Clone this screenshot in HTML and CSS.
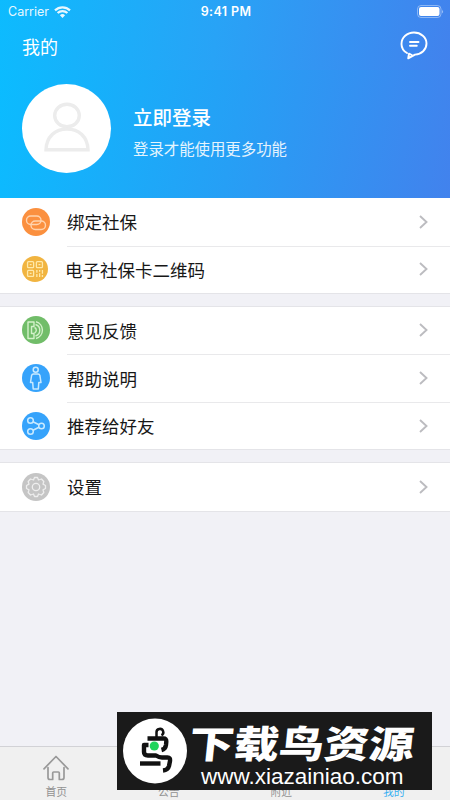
FILE: index.html
```html
<!DOCTYPE html>
<html lang="zh-CN">
<head>
	<meta charset="UTF-8">
	<meta name="viewport" content="width=device-width, initial-scale=1.0">
	<title>我的</title>
	<link rel="stylesheet" href="styles.css">
</head>

<body>
<div class="app">
	<header class="top">
		<div class="status-bar">
			<div class="carrier">
				<span>Carrier</span>
				<svg class="wifi" width="17" height="12" viewBox="0 0 17 12" fill="none" stroke="#fff" stroke-width="2.2">
					<path d="M1 4.4a10.6 10.6 0 0 1 15 0M3.6 7.1a6.9 6.9 0 0 1 9.8 0"/>
					<path d="M8.5 12L5.9 9.3a3.7 3.7 0 0 1 5.2 0z" fill="#fff" stroke="none"/>
				</svg>
			</div>
			<div class="time">9:41 PM</div>
			<svg class="battery" width="27" height="13" viewBox="0 0 27 13">
				<rect x=".5" y=".5" width="23.5" height="12" rx="3.5" fill="none" stroke="#fff" stroke-opacity=".4"/>
				<rect x="2" y="2" width="20.5" height="9" rx="2" fill="#fff"/>
				<path d="M25.2 4.5q1.6 2 0 4z" fill="#fff" fill-opacity=".6"/>
			</svg>
		</div>
		<div class="nav-bar">
			<h1 class="title">我的</h1>
			<svg class="message" width="28" height="29" viewBox="0 0 28 29" fill="none" stroke="#fff" stroke-width="1.9" stroke-linecap="round" stroke-linejoin="round">
				<path d="M7 22C3.500 19.900 1.500 16.600 1.500 12.900 1.500 6.500 7.100 1.500 14 1.500S26.500 6.300 26.500 12.500 21.500 23.200 15 23.600L8.200 27.300 9 22.700 11.800 24"/>
				<path d="M10 11H18.500M10 14.800H16.800"/>
			</svg>
		</div>
	</header>

	<section class="profile">
		<div class="avatar">
			<svg width="46" height="50" viewBox="0 0 46 50" fill="none" stroke="#ececec" stroke-width="3.400">
				<ellipse cx="23" cy="13.500" rx="12.300" ry="11.300"/>
				<path d="M2 47.700C2.500 35 11 27 23 27S43.500 35 44 47.700Z"/>
			</svg>
		</div>
		<div class="login">
			<div class="login-title">立即登录</div>
			<div class="login-text">登录才能使用更多功能</div>
		</div>
	</section>

	<main class="menu">
		<div class="group">
			<div class="row">
				<svg class="icon" viewBox="0 0 28 28" fill="none" stroke="#ffd3ad" stroke-width="1.400">
					<circle cx="14" cy="14" r="14" fill="#fb903f" stroke="none"/>
					<rect x="4.500" y="8" width="14.500" height="8.500" rx="4.250"/>
					<rect x="9" y="13" width="14.500" height="8.500" rx="4.250"/>
				</svg>
				<div class="label">绑定社保</div>
				<svg class="arrow" viewBox="0 0 9 14"><path d="M1 1l6.500 6L1 13"/></svg>
			</div>
			<div class="row row-code">
				<svg class="icon" viewBox="0 0 28 28" fill="none" stroke="#ffe9a9" stroke-width="1.400">
					<circle cx="14" cy="14" r="14" fill="#f1b440" stroke="none"/>
					<rect x="6" y="6" width="6.500" height="6.500" rx="1"/>
					<rect x="15.500" y="6" width="6.500" height="6.500" rx="1"/>
					<rect x="6" y="15.500" width="6.500" height="6.500" rx="1"/>
					<path d="M8.300 9.300h2M17.800 9.300h2M8.300 18.800h2M16 15v3m0 1.500v3M19 15v2m0 1.500v4M22 15v4m0 1.500v2"/>
				</svg>
				<div class="label">电子社保卡二维码</div>
				<svg class="arrow" viewBox="0 0 9 14"><path d="M1 1l6.500 6L1 13"/></svg>
			</div>
		</div>

		<div class="group">
			<div class="row">
				<svg class="icon" viewBox="0 0 28 28" fill="none" stroke="#d3f1c9" stroke-width="1.400" stroke-linejoin="round">
					<circle cx="14" cy="14" r="14" fill="#71bd69" stroke="none"/>
					<path d="M6 6H12V10.500H9.500V17.500H12V22.500H6Z"/>
					<path d="M12.500 11.500a3 3 0 0 1 0 5.500M13.500 8.500a6 6 0 0 1 0 11.500M14 5.700a8.700 8.700 0 0 1 0 16.800"/>
				</svg>
				<div class="label">意见反馈</div>
				<svg class="arrow" viewBox="0 0 9 14"><path d="M1 1l6.500 6L1 13"/></svg>
			</div>
			<div class="row">
				<svg class="icon" viewBox="0 0 28 28" fill="none" stroke="#c9eaff" stroke-width="1.500" stroke-linejoin="round">
					<circle cx="14" cy="14" r="14" fill="#36a3fb" stroke="none"/>
					<circle cx="13.700" cy="5.700" r="2.500"/>
					<path d="M11.500 10H16Q17.500 10 17.900 11.500L19 18.500H16.800L16.300 25H11.200L10.700 18.500H8.500L9.600 11.500Q10 10 11.500 10Z"/>
				</svg>
				<div class="label">帮助说明</div>
				<svg class="arrow" viewBox="0 0 9 14"><path d="M1 1l6.500 6L1 13"/></svg>
			</div>
			<div class="row">
				<svg class="icon" viewBox="0 0 28 28" fill="none" stroke="#c9eaff" stroke-width="1.500">
					<circle cx="14" cy="14" r="14" fill="#36a3fb" stroke="none"/>
					<circle cx="8.500" cy="8.500" r="2.800"/>
					<circle cx="19.500" cy="14" r="2.800"/>
					<circle cx="8.500" cy="19.500" r="2.800"/>
					<path d="M11 9.800L17 12.700M11 18.200L17 15.300"/>
				</svg>
				<div class="label">推荐给好友</div>
				<svg class="arrow" viewBox="0 0 9 14"><path d="M1 1l6.500 6L1 13"/></svg>
			</div>
		</div>

		<div class="group">
			<div class="row">
				<svg class="icon" viewBox="0 0 28 28" fill="none" stroke="#eee" stroke-width="1.300" stroke-linejoin="round">
					<circle cx="14" cy="14" r="14" fill="#c5c5c5" stroke="none"/>
					<circle cx="14" cy="14" r="3.700"/>
					<path d="M12.500 4.500H15.500L16.500 7 19.500 6 21.800 8.500 21 11.200 23.500 12.500V15.500L21 16.800 21.800 19.500 19.500 22 16.500 21 15.500 23.500H12.500L11.500 21 8.500 22 6.200 19.500 7 16.800 4.500 15.500V12.500L7 11.200 6.200 8.500 8.500 6 11.500 7Z"/>
				</svg>
				<div class="label">设置</div>
				<svg class="arrow" viewBox="0 0 9 14"><path d="M1 1l6.500 6L1 13"/></svg>
			</div>
		</div>
	</main>

	<nav class="tab-bar">
		<div class="tab">
			<svg width="26" height="26" viewBox="0 0 26 26" fill="none" stroke="#999" stroke-width="1.700" stroke-linejoin="round" stroke-linecap="round">
				<path d="M1 13.800L13 1.500 25 13.800"/>
				<path d="M5 12.500V22.500Q5 24.500 7 24.500H9.700V18Q9.700 17 10.700 17H15.300Q16.300 17 16.300 18V24.500H19Q21 24.500 21 22.500V12.500"/>
			</svg>
			<span>首页</span>
		</div>
		<div class="tab"><span>公告</span></div>
		<div class="tab"><span>附近</span></div>
		<div class="tab active"><span>我的</span></div>
	</nav>

	<div class="banner">
		<svg class="bird" width="64" height="66" viewBox="0 0 64 66" fill="none" stroke="#111" stroke-width="4.400" stroke-linejoin="round">
			<ellipse cx="32" cy="33" rx="32" ry="32.500" fill="#fff" stroke="none"/>
			<path d="M33.500 19V14.500a3.400 3.400 0 1 1 5 2.800" stroke-width="2.500"/>
			<path d="M24.500 20.500H40.500Q43.500 20.500 43.300 23.500L43 27Q42.500 31 38.500 32"/>
			<path d="M25.500 27H21V34Q21 37.500 25 37.500H33Q36 39.500 39 39.500H44.500Q47.500 39.500 47 43L46 48Q45 52 40 52.500"/>
			<path d="M17 45.500H37.500"/>
			<circle cx="31.300" cy="28" r="4.600" fill="#20d45b" stroke="none"/>
		</svg>
		<div class="banner-text">
			<div class="banner-name">下载鸟资源</div>
			<div class="banner-url">www.xiazainiao.com</div>
		</div>
	</div>
</div>
</body>
</html>
```
FILE: styles.css
```css
* {
	box-sizing: border-box;
}
body {
	margin: 0;
	font-family: "Liberation Sans", "Noto Sans CJK SC", sans-serif;
	color: #171717;
}
svg {
	display: block;
	flex-shrink: 0;
}
.app {
	position: relative;
	display: flex;
	flex-direction: column;
	width: 450px;
	height: 800px;
	overflow: hidden;
	background: #f1f1f6;
}

/* header */
.top {
	height: 70px;
	color: #fff;
	background: linear-gradient(98deg, #0dbbfe, #28a3f6 48%, #4282ed);
}
.status-bar {
	display: grid;
	grid-template-columns: 1fr auto 1fr;
	align-items: center;
	height: 23px;
	padding: 0 6px 0 8px;
	font-family: Inter, sans-serif;
	font-size: 12.5px;
}
.carrier {
	display: flex;
	gap: 5px;
	align-items: center;
	opacity: .9;
}
.time {
	font-weight: 600;
	letter-spacing: .4px;
}
.battery {
	justify-self: end;
}
.nav-bar {
	display: flex;
	justify-content: space-between;
	align-items: center;
	height: 45px;
	padding: 0 22px;
}
.title {
	margin: 0;
	font-size: 18px;
	font-weight: 400;
}
.profile {
	display: flex;
	align-items: center;
	height: 128px;
	padding: 0 22px 12px;
	color: #fff;
	background: linear-gradient(101deg, #0bbcff, #269ff5 52%, #4282ed);
}
.avatar {
	display: flex;
	justify-content: center;
	align-items: center;
	width: 89px;
	height: 89px;
	padding-bottom: 3px;
	border-radius: 50%;
	background: #fff;
}
.login {
	margin-left: 22px;
	padding-top: 11px;
}
.login-title {
	font-size: 19.5px;
	font-weight: 500;
	line-height: 32px;
}
.login-text {
	font-size: 15.4px;
	line-height: 31px;
	opacity: .88;
}

/* menu */
.menu {
	flex: 1;
}
.group {
	margin-bottom: 13.500px;
	background: #fff;
	box-shadow: 0 1px #e4e4e8;
}
.group + .group {
	box-shadow: 0 1px #e4e4e8, 0 -1px #e4e4e8;
}
.row {
	display: flex;
	align-items: center;
	position: relative;
	height: 47.600px;
	padding: 0 22px;
}
.row + .row::before {
	content: "";
	position: absolute;
	top: 0;
	left: 67px;
	right: 0;
	height: 1px;
	background: #e9e9eb;
}
.icon {
	width: 28px;
	height: 28px;
}
.label {
	flex: 1;
	margin-left: 17px;
	font-size: 17.500px;
}
.row-code .icon {
	width: 26px;
	height: 26px;
}
.arrow {
	width: 9px;
	height: 14px;
	fill: none;
	stroke: #bcbcc0;
	stroke-width: 1.900;
}

/* tabs */
.tab-bar {
	display: flex;
	height: 54px;
	border-top: 1px solid #d2d2d6;
	background: #f0f0f0;
}
.tab {
	display: flex;
	flex: 1;
	flex-direction: column;
	justify-content: flex-end;
	align-items: center;
	gap: 3px;
	font-size: 10.800px;
	line-height: 16px;
	color: #929292;
}
.active {
	color: #36aef0;
}

/* site banner over the tabs */
.banner {
	position: absolute;
	top: 712px;
	left: 117px;
	display: flex;
	align-items: center;
	width: 315px;
	height: 78px;
	padding-left: 6px;
	color: #fff;
	background: #1a1a1a;
}
.banner-text {
	margin-left: 2px;
	padding-top: 9px;
}
.banner-name {
	font-size: 45px;
	font-weight: 900;
	line-height: 43px;
	transform: skewX(-6deg) scaleY(.84);
	white-space: nowrap;
}
.banner-url {
	margin-left: 12px;
	font-size: 22.500px;
	line-height: 22px;
}
```
